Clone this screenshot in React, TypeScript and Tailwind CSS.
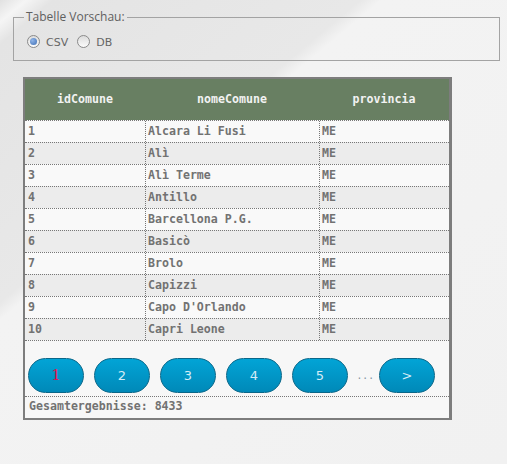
const rows = [
  ["1", "Alcara Li Fusi", "ME"],
  ["2", "Alì", "ME"],
  ["3", "Alì Terme", "ME"],
  ["4", "Antillo", "ME"],
  ["5", "Barcellona P.G.", "ME"],
  ["6", "Basicò", "ME"],
  ["7", "Brolo", "ME"],
  ["8", "Capizzi", "ME"],
  ["9", "Capo D'Orlando", "ME"],
  ["10", "Capri Leone", "ME"],
];

const pages = ["1", "2", "3", "4", "5"];

function Radio({ checked }: { checked?: boolean }) {
  return (
    <span className="w-[13px] h-[13px] rounded-full border border-[#8a8a8a] bg-[linear-gradient(#dcdcdc,#fbfbfb)] flex items-center justify-center shrink-0">
      {checked && <span className="w-[7px] h-[7px] rounded-full bg-[radial-gradient(circle_at_35%_35%,#8fb4e8,#3f6fb5)]" />}
    </span>
  );
}

function PageButton({ label, current }: { label: string; current?: boolean }) {
  return (
    <button className="w-[56px] h-[35px] rounded-full border border-[#0a6789] bg-[linear-gradient(#02a4d6,#0089b8)] flex items-center justify-center shrink-0 font-normal">
      {current ? (
        <span className="text-[15px] text-[#e3104a] font-['DejaVu_Serif',serif]">{label}</span>
      ) : (
        <span className="text-[13px] text-[#d4ecf6] font-['DejaVu_Sans',sans-serif]">{label}</span>
      )}
    </button>
  );
}

export default function App() {
  return (
    <div className="w-[507px] h-[464px] overflow-hidden bg-[linear-gradient(140deg,#e1e1e1_0%,#f5f5f5_2.5%,#e4e4e4_5%,#e8e8e8_34%,#f3f3f3_36%,#f1f1f1_100%)] pt-[10px]">
      {/* Source selector */}
      <fieldset className="ml-[13px] w-[487px] h-[51px] border border-[#a3a3a3] px-[10px]">
        <legend className="px-[2px] text-[12px] leading-[14px] text-[#5f5f5f] font-['Open_Sans',sans-serif]">
          Tabelle Vorschau:
        </legend>
        <div className="flex items-center mt-[8px] ml-[3px] text-[11px] text-[#666] font-['DejaVu_Sans',sans-serif]">
          <Radio checked />
          <span className="ml-[6px] mt-[3px]">CSV</span>
          <span className="ml-[9px]">
            <Radio />
          </span>
          <span className="ml-[6px] mt-[3px]">DB</span>
        </div>
      </fieldset>

      {/* Result table */}
      <div className="ml-[23px] mt-[16px] w-[429px] h-[343px] border-2 border-r-[3px] border-[#7d7d7d] bg-[#f7f7f7] font-['DejaVu_Sans_Mono',monospace] text-[11.6px] font-bold">
        <div className="flex h-[41px] bg-[#687f62] text-[#f2f2f2] items-center">
          <div className="w-[120px] text-center">idComune</div>
          <div className="w-[174px] text-center">nomeComune</div>
          <div className="flex-1 text-center">provincia</div>
        </div>
        {rows.map((r, i) => (
          <div
            key={r[0]}
            className={
              "flex h-[22px] border-t border-dotted border-[#777] text-[#727272] " +
              (i % 2 === 0 ? "bg-[#f9f9f9]" : "bg-[#ececec]")
            }
          >
            <div className="w-[120px] pl-[3px] flex items-center">{r[0]}</div>
            <div className="w-[174px] pl-[2px] border-l border-dotted border-[#777] flex items-center">{r[1]}</div>
            <div className="flex-1 pl-[2px] border-l border-dotted border-[#777] flex items-center">{r[2]}</div>
          </div>
        ))}

        {/* Pagination */}
        <div className="h-[57px] border-y border-dotted border-[#777] flex items-start pt-[17px] pl-[3px]">
          <div className="flex items-center gap-[10px]">
            {pages.map((p) => (
              <PageButton key={p} label={p} current={p === "1"} />
            ))}
          </div>
          <span className="w-[31px] h-[35px] flex items-end justify-end pr-[4px] pb-[9px] text-[12px] tracking-[2px] text-[#8797a3] font-normal font-['DejaVu_Sans',sans-serif]">
            ...
          </span>
          <PageButton label=">" />
        </div>

        <div className="h-[20px] pl-[4px] flex items-center text-[#727272]">Gesamtergebnisse: 8433</div>
      </div>
    </div>
  );
}
